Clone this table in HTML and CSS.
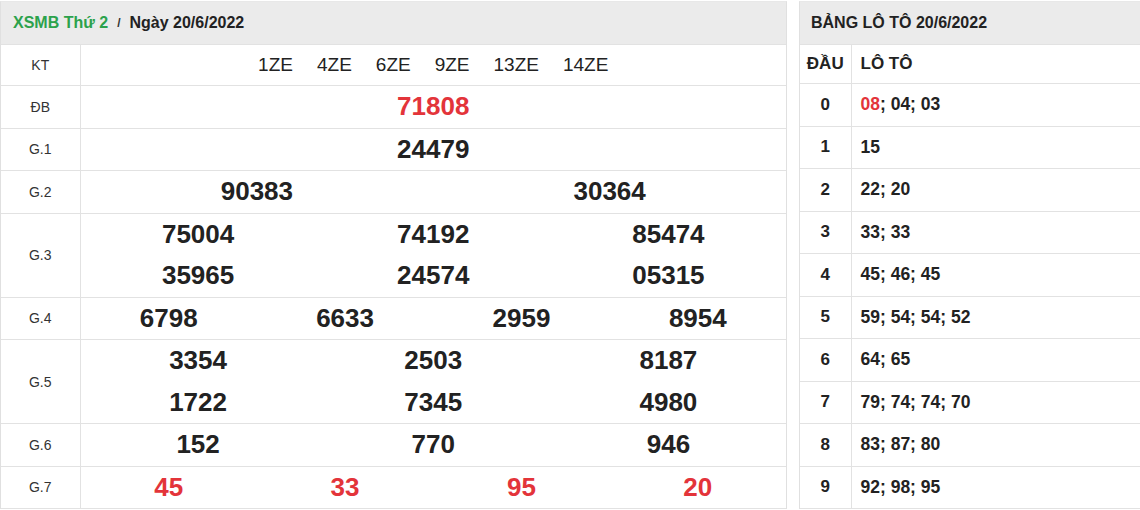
FILE: index.html
```html
<!DOCTYPE html>
<html lang="vi">
<head>
<meta charset="utf-8">
<title>XSMB 20/6/2022</title>
<link rel="stylesheet" href="styles.css">
</head>
<body>
<div class="page">
  <section class="panel panel-main">
    <div class="panel-head">
      <span class="brand">XSMB Thứ 2</span><span class="sep">/</span><span class="date">Ngày 20/6/2022</span>
    </div>
    <table class="kq">
      <tr class="row-kt">
        <td class="lbl">KT</td>
        <td class="codes"><span>1ZE</span><span>4ZE</span><span>6ZE</span><span>9ZE</span><span>13ZE</span><span>14ZE</span></td>
      </tr>
      <tr>
        <td class="lbl">ĐB</td>
        <td><div class="nums n1"><span class="red">71808</span></div></td>
      </tr>
      <tr>
        <td class="lbl">G.1</td>
        <td><div class="nums n1"><span>24479</span></div></td>
      </tr>
      <tr>
        <td class="lbl">G.2</td>
        <td><div class="nums n2"><span>90383</span><span>30364</span></div></td>
      </tr>
      <tr>
        <td class="lbl">G.3</td>
        <td><div class="nums n3"><span>75004</span><span>74192</span><span>85474</span><span>35965</span><span>24574</span><span>05315</span></div></td>
      </tr>
      <tr>
        <td class="lbl">G.4</td>
        <td><div class="nums n4"><span>6798</span><span>6633</span><span>2959</span><span>8954</span></div></td>
      </tr>
      <tr>
        <td class="lbl">G.5</td>
        <td><div class="nums n3"><span>3354</span><span>2503</span><span>8187</span><span>1722</span><span>7345</span><span>4980</span></div></td>
      </tr>
      <tr>
        <td class="lbl">G.6</td>
        <td><div class="nums n3"><span>152</span><span>770</span><span>946</span></div></td>
      </tr>
      <tr>
        <td class="lbl">G.7</td>
        <td><div class="nums n4"><span class="red">45</span><span class="red">33</span><span class="red">95</span><span class="red">20</span></div></td>
      </tr>
    </table>
  </section>

  <section class="panel panel-loto">
    <div class="panel-head">
      <span class="date">BẢNG LÔ TÔ 20/6/2022</span>
    </div>
    <table class="loto">
      <tr class="row-head"><th class="dau">ĐẦU</th><th class="lt">LÔ TÔ</th></tr>
      <tr><td class="dau">0</td><td class="lt"><span class="red">08</span>; 04; 03</td></tr>
      <tr><td class="dau">1</td><td class="lt">15</td></tr>
      <tr><td class="dau">2</td><td class="lt">22; 20</td></tr>
      <tr><td class="dau">3</td><td class="lt">33; 33</td></tr>
      <tr><td class="dau">4</td><td class="lt">45; 46; 45</td></tr>
      <tr><td class="dau">5</td><td class="lt">59; 54; 54; 52</td></tr>
      <tr><td class="dau">6</td><td class="lt">64; 65</td></tr>
      <tr><td class="dau">7</td><td class="lt">79; 74; 74; 70</td></tr>
      <tr><td class="dau">8</td><td class="lt">83; 87; 80</td></tr>
      <tr><td class="dau">9</td><td class="lt">92; 98; 95</td></tr>
    </table>
  </section>
</div>
</body>
</html>
```

FILE: styles.css
```css
* { box-sizing: border-box; }
html, body { margin: 0; padding: 0; background: #fff; }
body {
  font-family: "Liberation Sans", Arial, sans-serif;
  color: #222;
  overflow: hidden;
}
.page {
  display: flex;
  gap: 12px;
  padding-top: 1px;
  width: 1140px;
}
.panel {
  border-left: 1px solid #e0e0e0;
  border-top: 1px solid #e8e8e8;
  background: #fff;
}
.panel-main { width: 787px; border-right: 1px solid #e0e0e0; }
.panel-loto { flex: 1; }
.panel-head {
  height: 42px;
  background: #ebebeb;
  display: flex;
  align-items: center;
  padding-left: 12px;
  font-size: 16px;
  font-weight: bold;
}
.panel-loto .panel-head { padding-left: 11px; }
.brand { color: #2ca24c; }
.sep { font-size: 12px; color: #333; margin: 0 9px 0 9px; }
.date { color: #222; }

table { border-collapse: collapse; width: 100%; }
td, th { padding: 0; border: 1px solid #e2e2e2; }
.panel-main table td:first-child, .panel-loto table td:first-child, .panel-loto table th:first-child { border-left: 0; }
.panel-main table td:last-child { border-right: 0; }
.panel-loto table td:last-child, .panel-loto table th:last-child { border-right: 0; }

.lbl {
  width: 79px;
  text-align: center;
  font-size: 14px;
  color: #333;
}
.codes {
  height: 41px;
  text-align: center;
  font-size: 19px;
  color: #222;
}
.codes span { display: inline-block; margin: 0 12px; }
.nums {
  display: grid;
  font-size: 26px;
  font-weight: bold;
  line-height: 41.5px;
  text-align: center;
  color: #222;
}
.n1 { grid-template-columns: 1fr; }
.n2 { grid-template-columns: repeat(2, 1fr); }
.n3 { grid-template-columns: repeat(3, 1fr); }
.n4 { grid-template-columns: repeat(4, 1fr); }
.red { color: #e3343a; }

.loto th, .loto td { font-weight: bold; }
.loto .row-head th { height: 39px; font-size: 17px; }
.loto td { height: 42.5px; font-size: 17px; }
.loto .dau { width: 51px; text-align: center; }
.loto .lt { text-align: left; padding-left: 9px; }
.loto td.lt { font-size: 17.5px; }
```
